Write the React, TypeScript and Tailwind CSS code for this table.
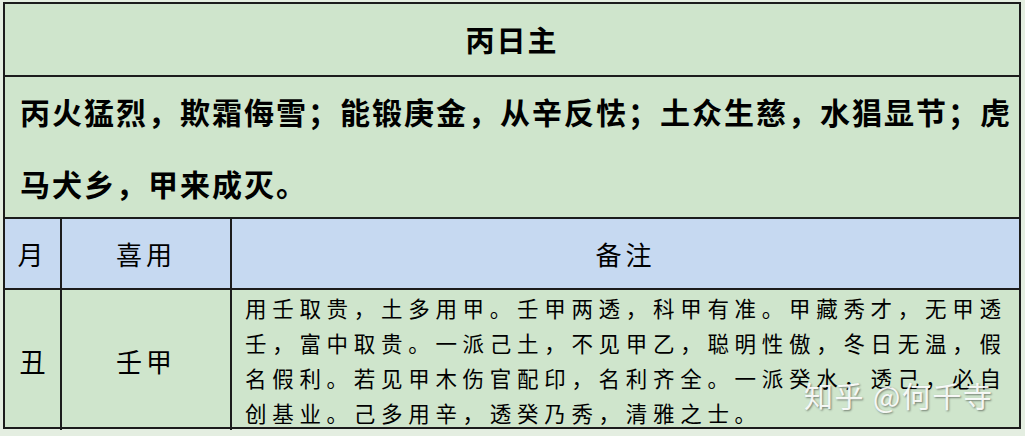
import React from 'react';

const font = { fontFamily: '"Noto Sans CJK SC", "Noto Sans", sans-serif' };

export default function App() {
  return (
    <div lang="zh-CN" style={font} className="w-[1025px] h-[436px] bg-[#e4eee1] pt-[2px] pl-[3px] text-black overflow-hidden">
      <div className="relative w-[1018px] border-2 border-[#1c1c1c] bg-[#cfe5cc]">
        {/* title */}
        <div className="h-[71px] flex items-center justify-center text-[29px] font-bold tracking-[2px]">
          丙日主
        </div>

        {/* verse */}
        <div className="h-[142px] border-t-2 border-[#1c1c1c] pl-[15px] flex flex-col justify-center text-[30px] font-bold leading-[72px] tracking-[2px]">
          <div>丙火猛烈，欺霜侮雪；能锻庚金，从辛反怯；土众生慈，水猖显节；虎</div>
          <div>马犬乡，甲来成灭。</div>
        </div>

        {/* header */}
        <div className="grid grid-cols-[57px_170px_1fr] h-[71px] border-t-2 border-[#1c1c1c] bg-[#c6d9f1] text-[26px] tracking-[4px]">
          <div className="flex items-center justify-center border-r-2 border-[#1c1c1c]">月</div>
          <div className="flex items-center justify-center border-r-2 border-[#1c1c1c]">喜用</div>
          <div className="flex items-center justify-center">备注</div>
        </div>

        {/* body */}
        <div className="grid grid-cols-[57px_170px_1fr] h-[139px] border-t-2 border-[#1c1c1c] text-[26px]">
          <div className="flex items-center justify-center border-r-2 border-[#1c1c1c]">丑</div>
          <div className="flex items-center justify-center border-r-2 border-[#1c1c1c] tracking-[4px]">壬甲</div>
          <div className="pl-[13px] pr-[2px] text-[21.5px] leading-[35px] tracking-[5.7px]">
            用壬取贵，土多用甲。壬甲两透，科甲有准。甲藏秀才，无甲透壬，富中取贵。一派己土，不见甲乙，聪明性傲，冬日无温，假名假利。若见甲木伤官配印，名利齐全。一派癸水，透己，必自创基业。己多用辛，透癸乃秀，清雅之士。
          </div>
        </div>

        {/* watermark */}
        <div className="absolute left-[799px] top-[370px] text-[29px] text-white/90 tracking-[1.5px] [text-shadow:1px_1px_2px_rgba(0,0,0,0.45)]">
          知乎 @何千寺
        </div>
      </div>
    </div>
  );
}
